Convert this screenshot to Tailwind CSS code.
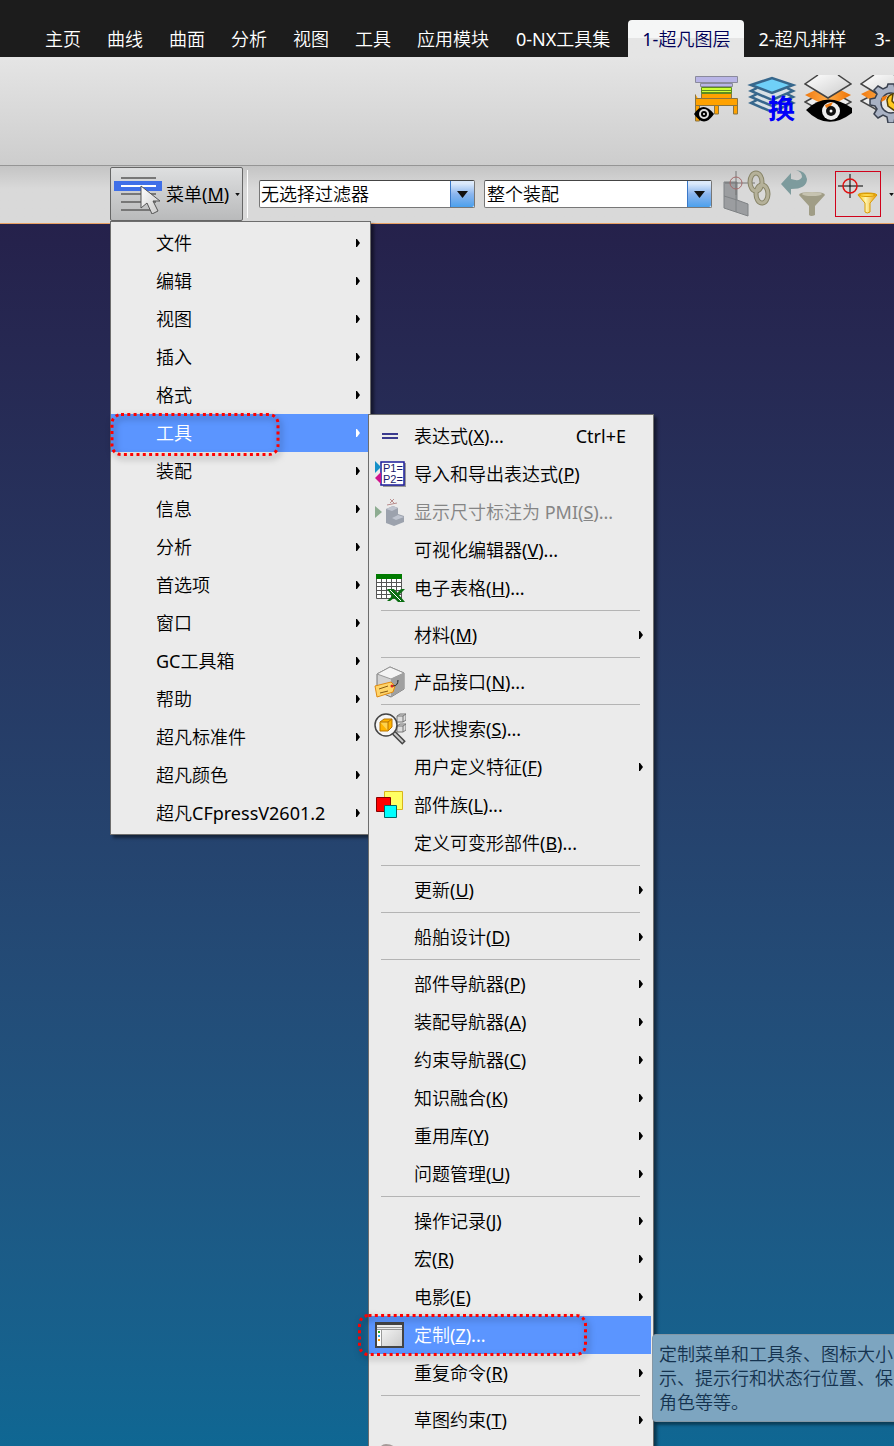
<!DOCTYPE html>
<html lang="zh-CN">
  <head>
    <meta charset="UTF-8" />
    <meta name="viewport" content="width=device-width, initial-scale=1.0" />
    <title>NX 菜单</title>
    <script src="https://cdn.jsdelivr.net/npm/@tailwindcss/browser@4"></script>
  </head>
  <body class="flex h-screen flex-col overflow-hidden bg-[#1c1c1c] font-['Noto_Sans','Noto_Sans_CJK_SC_DemiLight','Noto_Sans_CJK_SC_Light','Noto_Sans_CJK_SC',sans-serif] text-lg/6 text-black">

    <!-- Shared icon symbols -->
    <svg class="absolute size-0">
      <symbol id="arrow" viewBox="0 0 5 8"><path d="M1 0h1l3 4-3 4H1z" fill="currentColor" /></symbol>
      <symbol id="caret" viewBox="0 0 11 7"><path d="M0 0h11L5.500 7z" fill="#111" /></symbol>
      <linearGradient id="sheet" x1="0" y1="0" x2="1" y2="1"><stop offset="0" stop-color="#fff" /><stop offset="1" stop-color="#c9c9c9" /></linearGradient>
      <linearGradient id="gold" x1="0" x2="1"><stop offset="0" stop-color="#ffc400" /><stop offset=".4" stop-color="#fff6b0" /><stop offset="1" stop-color="#e89500" /></linearGradient>
      <linearGradient id="orange" x1="0" x2="1"><stop offset="0" stop-color="#f07a10" /><stop offset=".5" stop-color="#ffad4a" /><stop offset="1" stop-color="#ee7000" /></linearGradient>
    </svg>

    <!-- Ribbon tabs -->
    <nav class="flex h-[57px] shrink-0 items-end overflow-hidden pl-8 whitespace-nowrap text-white">
      <button class="h-[37px] shrink-0 px-[13px]">主页</button>
      <button class="h-[37px] shrink-0 px-[13px]">曲线</button>
      <button class="h-[37px] shrink-0 px-[13px]">曲面</button>
      <button class="h-[37px] shrink-0 px-[13px]">分析</button>
      <button class="h-[37px] shrink-0 px-[13px]">视图</button>
      <button class="h-[37px] shrink-0 px-[13px]">工具</button>
      <button class="h-[37px] shrink-0 px-[13px]">应用模块</button>
      <button class="h-[37px] shrink-0 px-[14px]">0-NX工具集</button>
      <button class="ml-1 h-[37px] shrink-0 rounded-t-sm bg-linear-to-b from-[#f5f6f6] from-50% to-[#e5e5e5] to-50% px-[14px] text-[#000058]">1-超凡图层</button>
      <button class="h-[37px] shrink-0 px-[14px]">2-超凡排样</button>
      <button class="h-[37px] shrink-0 px-[14px]">3-</button>
    </nav>

    <!-- Ribbon -->
    <div class="flex h-[109px] shrink-0 items-start justify-end gap-2 overflow-hidden border-b border-[#959595] bg-linear-to-b from-[#e5e5e5] to-[#cdcdcd] pt-[18px]">
      <button class="shrink-0" aria-label="图层料架">
        <svg class="size-12" viewBox="0 0 48 48">
          <path d="M3.500 19.500V46h4V26M22.500 29v10h4V29M41.500 29v10h4V26" fill="#ffa200" stroke="#8a7440" />
          <path d="M3.500 23.500h42v7h-42z" fill="#ffa200" stroke="#8a7440" />
          <path d="M9.500 18.500h30v5h-30z" fill="#ffa200" stroke="#8a7440" />
          <path d="M9.500 12.500h30v6h-30z" fill="#ceff38" stroke="#5d8b20" />
          <path d="M10 15.500h29M10 17.500h29" stroke="#5d8b20" />
          <path d="M8.500 8.500h32v3h-32z" fill="#b9b5e6" stroke="#8a8a9c" />
          <path d="M3.500 1.500h42v6h-42z" fill="#b9b5e6" stroke="#8a8a9c" />
          <path d="M2 39q9-14 20 0-10 15-20 0z" fill="#000" />
          <circle cx="12" cy="39" r="4" fill="#000" stroke="#ddd" stroke-width="2" />
          <circle cx="12" cy="39" r="1" fill="#fff" />
        </svg>
      </button>
      <button class="shrink-0" aria-label="图层转换">
        <svg class="size-12 overflow-visible" viewBox="0 0 48 48">
          <g fill="#d7e0e5" stroke="#37678c" stroke-width="2.500">
            <path d="M9 25l-6 3 21 9 21-9-6-3" />
            <path d="M9 19l-6 3 21 9 21-9-6-3" />
            <path d="M9 13l-6 3 21 9 21-9-6-3" />
            <path d="M3 10L24 3l21 7-21 8z" fill="#6fd0f8" />
          </g>
          <text x="20" y="44" font-size="27" font-weight="700" font-family="Noto Sans CJK SC" fill="#0000fa">换</text>
        </svg>
      </button>
      <button class="shrink-0" aria-label="图层可见">
        <svg class="size-12" viewBox="0 0 48 48">
          <path d="M1 27l23-13 23 13-23 13z" fill="#eee" stroke="#444" stroke-width="1.500" />
          <path d="M1 20L24 9l23 11-23 12z" fill="url(#orange)" />
          <path d="M14 0L1 9l23 14L47 9 34 0z" fill="url(#sheet)" />
          <path d="M14 0L1 9l23 14L47 9 34 0" fill="none" stroke="#444" stroke-width="1.500" />
          <path d="M2 35q20-20 46-2v5q-25 19-46-3z" fill="#000" />
          <circle cx="27" cy="36" r="9" fill="#eee" />
          <path d="M21 30l8-3-2 4-5 2z" fill="#f07a10" />
          <circle cx="27" cy="36" r="5" fill="#111" />
          <circle cx="27" cy="36" r="1.500" fill="#fff" />
        </svg>
      </button>
      <button class="-mr-3.5 shrink-0" aria-label="图层设置">
        <svg class="size-12" viewBox="0 0 48 48">
          <path d="M1 26l23-12 23 12-23 13z" fill="#eee" stroke="#444" stroke-width="1.500" />
          <path d="M1 19L24 8l23 12-23 13z" fill="url(#orange)" />
          <path d="M14 0L1 9l23 14L47 9 34 0" fill="url(#sheet)" stroke="#444" stroke-width="1.500" />
          <g fill="#a9b2c4" stroke="#39404e" stroke-width="1.500">
            <path d="M28 9h6l1 5 4 2 4-3 4 4v22l-4 4-4-3-4 2-1 6h-6l-1-6-4-2-5 3-4-4 3-5-2-3-5-1v-6l5-1 2-4-3-4 4-4 5 3 4-2z" />
            <circle cx="31" cy="28" r="10" fill="#e6e6e6" />
          </g>
          <path d="M33 19q-5 1-6 6l1 6 7 5 9 1v-6l-8-1-4-4z" fill="#ffc820" stroke="#5a4300" stroke-width="1.500" />
          <path d="M22 22l6-2-3 5-4 2z" fill="#f07a10" />
        </svg>
      </button>
    </div>

    <!-- Selection bar -->
    <div class="flex h-[58px] shrink-0 items-center border-b border-[#e9a063] bg-linear-to-b from-[#c4c4c4] to-[#d9d9d9] to-40% pb-px pl-[110px]">
      <div class="relative z-10 h-[54px] shrink-0">
        <button class="flex h-full w-[133px] items-center rounded-xs border border-[#666] bg-linear-to-b from-[#dedfe0] to-[#b9babb] pl-[3px] whitespace-nowrap">
          <svg class="h-10 w-[50px] shrink-0" viewBox="0 0 50 40">
            <path d="M7 4h35M7 20h35M7 28h35M7 36h35" stroke="#777" stroke-width="2" />
            <path d="M0 7h48v10H0z" fill="#3f6fe8" />
            <path d="M7 12h35" stroke="#fff" stroke-width="2" />
            <path d="M27 12v22l6-5 5 11 6-3-5-10h7z" fill="url(#sheet)" stroke="#555" />
          </svg>
          <span class="ml-[2px]">菜单(<u>M</u>)</span>
          <svg class="ml-1.5 h-[3px] w-[5px]" viewBox="0 0 11 7"><use href="#caret" /></svg>
        </button>

        <!-- Main menu -->
        <ul class="absolute top-full left-0 w-[261px] border border-[#6d6d6d] bg-[#ebebeb] py-[2px] pr-px shadow-[3px_3px_3px_#0007] *:flex *:h-[38px] *:items-center *:justify-between *:pr-[9px] *:pl-[45px] *:whitespace-nowrap">
          <li><button>文件</button><svg class="h-2 w-[5px]"><use href="#arrow" /></svg></li>
          <li><button>编辑</button><svg class="h-2 w-[5px]"><use href="#arrow" /></svg></li>
          <li><button>视图</button><svg class="h-2 w-[5px]"><use href="#arrow" /></svg></li>
          <li><button>插入</button><svg class="h-2 w-[5px]"><use href="#arrow" /></svg></li>
          <li><button>格式</button><svg class="h-2 w-[5px]"><use href="#arrow" /></svg></li>
          <li class="relative bg-[#5b95ff] text-white">
            <button>工具</button><svg class="h-2 w-[5px]"><use href="#arrow" /></svg>
            <svg class="absolute -top-1 -left-1 h-12 w-44 overflow-visible drop-shadow-[2px_3px_3px_#0008]">
              <rect x="5" y="4.500" width="166" height="40" rx="9" fill="none" stroke="#f00" stroke-width="3" stroke-dasharray="3 3.300" />
            </svg>

            <!-- Tools submenu -->
            <ul class="absolute top-0 left-[257px] w-[286px] border border-[#6d6d6d] bg-[#ebebeb] py-[2px] pr-[2px] text-black shadow-[3px_3px_3px_#0007] [&>li]:flex [&>li]:h-[38px] [&>li]:items-center [&>li]:pr-[8px] [&>li]:pl-[5px] [&>li]:whitespace-nowrap [&>hr]:mt-[3px] [&>hr]:mr-[11px] [&>hr]:mb-[5px] [&>hr]:ml-3 [&>hr]:border-[#b4b4b4]">
              <li>
                <svg class="size-8" viewBox="0 0 32 32"><path d="M8 14h16M8 18h16" stroke="#000070" stroke-width="1.500" /></svg>
                <button class="ml-2">表达式(<u>X</u>)...</button><span class="mr-[17px] ml-auto">Ctrl+E</span>
              </li>
              <li>
                <svg class="size-8" viewBox="0 0 32 32">
                  <path d="M9 5h23v24H9z" fill="#999" />
                  <path d="M7 4h23v23H7z" fill="#fff" stroke="#1d1d9c" stroke-width="1.500" />
                  <path d="M1 3l6 6-6 6z" fill="#1590c8" /><path d="M7 14v12l-6-6z" fill="#d0108c" />
                  <text x="9" y="14" font-size="11" font-family="Liberation Sans" fill="#1a1a6e">P1=</text>
                  <text x="9" y="25" font-size="11" font-family="Liberation Sans" fill="#1a1a6e">P2=</text>
                </svg>
                <button class="ml-2">导入和导出表达式(<u>P</u>)</button>
              </li>
              <li class="text-[#858585]">
                <svg class="size-8" viewBox="0 0 32 32">
                  <path d="M1 10l7 6-7 6z" fill="#8dac91" />
                  <path d="M12 13l7-3 5 2v6l6 2v6l-10 4-8-3z" fill="#9ca2ad" />
                  <path d="M12 13l7-3 5 2-6 3zM18 22l6-3 6 2-8 3z" fill="#bfc4cf" />
                  <path d="M13 9l10-2M16 3l4 4M20 3l-4 4" stroke="#b98c8c" />
                </svg>
                <button class="ml-2" disabled>显示尺寸标注为 PMI(<u>S</u>)...</button>
              </li>
              <li><button class="ml-10">可视化编辑器(<u>V</u>)...</button></li>
              <li>
                <svg class="size-8" viewBox="0 0 32 32">
                  <path d="M2.500 3.500h25v23h-25z" fill="#fff" stroke="#555" />
                  <path d="M2 10.500h25M2 14.500h25M2 18.500h25M2 22.500h25M7.500 7v19M12.500 7v19M17.500 7v19M22.500 7v19" stroke="#555" />
                  <path d="M2 2h26v5H2z" fill="#007a00" />
                  <path d="M13 17h7l3 4 4-4h4l-6 6 6 7h-7l-4-4-4 3h-3l5-5z" fill="#0a6e12" /><path d="M16 18l11 11" stroke="#fff" />
                </svg>
                <button class="ml-2">电子表格(<u>H</u>)...</button>
              </li>
              <hr />
              <li><button class="ml-10">材料(<u>M</u>)</button><svg class="ml-auto h-2 w-[5px]"><use href="#arrow" /></svg></li>
              <hr />
              <li>
                <svg class="size-8" viewBox="0 0 32 32">
                  <path d="M3 8l13-7 14 6v16l-13 8-14-6z" fill="#d2d2d2" stroke="#777" />
                  <path d="M3 8l13-7 14 6-13 6z" fill="#f4f4f4" stroke="#999" /><path d="M17 13l13-6v16l-13 8z" fill="#a0a0a0" />
                  <path d="M1 20l16-4 4 4-2 6-16 5z" fill="#ffd56a" stroke="#e08a10" />
                  <path d="M5 23l9-3M6 27l8-2" stroke="#8a5a10" /><circle cx="18" cy="20" r="1.500" fill="#d22" />
                  <path d="M19 20q5 0 5-6" fill="none" stroke="#222" />
                </svg>
                <button class="ml-2">产品接口(<u>N</u>)...</button>
              </li>
              <hr />
              <li>
                <svg class="size-8" viewBox="0 0 32 32">
                  <g fill="#ddd" stroke="#777"><path d="M23 3l3-2h6v6l-3 2h-6zM23 3h6v6M29 3l3-2M23 13l3-2h6v6l-3 2h-6zM23 13h6v6M29 13l3-2" /></g>
                  <path d="M20 20l10 10" stroke="#444" stroke-width="5" /><path d="M20 20l9 9" stroke="#ccc" stroke-width="2" />
                  <circle cx="12" cy="12" r="11" fill="#f6f6f6" stroke="#444" stroke-width="1.500" />
                  <path d="M6 9l4-3h8v8l-4 4H6z" fill="#ffb400" stroke="#b87400" /><path d="M6 9h8v9M14 9l4-3" fill="#ffd34d" stroke="#b87400" />
                </svg>
                <button class="ml-2">形状搜索(<u>S</u>)...</button>
              </li>
              <li><button class="ml-10">用户定义特征(<u>F</u>)</button><svg class="ml-auto h-2 w-[5px]"><use href="#arrow" /></svg></li>
              <li>
                <svg class="size-8" viewBox="0 0 32 32">
                  <path d="M10.500 2.500h18v18h-18z" fill="#ffff64" stroke="#d9b51a" />
                  <path d="M2.500 8.500h14v14h-14z" fill="#f00" stroke="#800" />
                  <path d="M10.500 16.500h12v12h-12z" fill="#0ff" stroke="#066" />
                </svg>
                <button class="ml-2">部件族(<u>L</u>)...</button>
              </li>
              <li><button class="ml-10">定义可变形部件(<u>B</u>)...</button></li>
              <hr />
              <li><button class="ml-10">更新(<u>U</u>)</button><svg class="ml-auto h-2 w-[5px]"><use href="#arrow" /></svg></li>
              <hr />
              <li><button class="ml-10">船舶设计(<u>D</u>)</button><svg class="ml-auto h-2 w-[5px]"><use href="#arrow" /></svg></li>
              <hr />
              <li><button class="ml-10">部件导航器(<u>P</u>)</button><svg class="ml-auto h-2 w-[5px]"><use href="#arrow" /></svg></li>
              <li><button class="ml-10">装配导航器(<u>A</u>)</button><svg class="ml-auto h-2 w-[5px]"><use href="#arrow" /></svg></li>
              <li><button class="ml-10">约束导航器(<u>C</u>)</button><svg class="ml-auto h-2 w-[5px]"><use href="#arrow" /></svg></li>
              <li><button class="ml-10">知识融合(<u>K</u>)</button><svg class="ml-auto h-2 w-[5px]"><use href="#arrow" /></svg></li>
              <li><button class="ml-10">重用库(<u>Y</u>)</button><svg class="ml-auto h-2 w-[5px]"><use href="#arrow" /></svg></li>
              <li><button class="ml-10">问题管理(<u>U</u>)</button><svg class="ml-auto h-2 w-[5px]"><use href="#arrow" /></svg></li>
              <hr />
              <li><button class="ml-10">操作记录(<u>J</u>)</button><svg class="ml-auto h-2 w-[5px]"><use href="#arrow" /></svg></li>
              <li><button class="ml-10">宏(<u>R</u>)</button><svg class="ml-auto h-2 w-[5px]"><use href="#arrow" /></svg></li>
              <li><button class="ml-10">电影(<u>E</u>)</button><svg class="ml-auto h-2 w-[5px]"><use href="#arrow" /></svg></li>
              <li class="relative bg-[#5b95ff] text-white">
                <svg class="size-8" viewBox="0 0 32 32">
                  <path d="M2 4h27v24H2z" fill="url(#sheet)" stroke="#444" stroke-width="2" />
                  <path d="M1 3h29v3H1z" fill="#444" /><path d="M3 6h25v4H3z" fill="#eee" /><path d="M3 8.500h25M3 10.500h25" stroke="#999" />
                  <path d="M3 11h4v16H3z" fill="#fff" /><path d="M7.500 11v16" stroke="#999" />
                  <path d="M4 12h2v2H4z" fill="#2a2" /><path d="M4 16h2v2H4z" fill="#2ae" /><path d="M4 20h2v2H4z" fill="#f90" />
                </svg>
                <button class="ml-2">定制(<u>Z</u>)...</button>
                <svg class="absolute -top-1 -left-3 h-12 w-60 overflow-visible drop-shadow-[2px_3px_3px_#0008]">
                  <rect x="2.500" y="3.500" width="226" height="39" rx="9" fill="none" stroke="#f00" stroke-width="3" stroke-dasharray="3 3.300" />
                </svg>
                <p role="tooltip" class="absolute top-[18px] left-[283px] w-64 rounded-sm border border-[#8497a5] bg-[#7da5c0] py-[7px] pl-[6px] text-[#15334f] shadow-[3px_3px_3px_#0006]">定制菜单和工具条、图标大小<br />示、提示行和状态行位置、保<br />角色等等。</p>
              </li>
              <li><button class="ml-10">重复命令(<u>R</u>)</button><svg class="ml-auto h-2 w-[5px]"><use href="#arrow" /></svg></li>
              <hr />
              <li><button class="ml-10">草图约束(<u>T</u>)</button><svg class="ml-auto h-2 w-[5px]"><use href="#arrow" /></svg></li>
              <li>
                <svg class="size-8" viewBox="0 0 32 32"><path d="M4 10q2-8 8-8 8 0 12 7v18H4z" fill="#a59b99" /><path d="M9 5l4 1-3 3z" fill="#d8cfcd" /></svg>
              </li>
            </ul>
          </li>
          <li><button>装配</button><svg class="h-2 w-[5px]"><use href="#arrow" /></svg></li>
          <li><button>信息</button><svg class="h-2 w-[5px]"><use href="#arrow" /></svg></li>
          <li><button>分析</button><svg class="h-2 w-[5px]"><use href="#arrow" /></svg></li>
          <li><button>首选项</button><svg class="h-2 w-[5px]"><use href="#arrow" /></svg></li>
          <li><button>窗口</button><svg class="h-2 w-[5px]"><use href="#arrow" /></svg></li>
          <li><button>GC工具箱</button><svg class="h-2 w-[5px]"><use href="#arrow" /></svg></li>
          <li><button>帮助</button><svg class="h-2 w-[5px]"><use href="#arrow" /></svg></li>
          <li><button>超凡标准件</button><svg class="h-2 w-[5px]"><use href="#arrow" /></svg></li>
          <li><button>超凡颜色</button><svg class="h-2 w-[5px]"><use href="#arrow" /></svg></li>
          <li><button>超凡CFpressV2601.2</button><svg class="h-2 w-[5px]"><use href="#arrow" /></svg></li>
        </ul>
      </div>

      <div class="ml-1 h-12 w-px shrink-0 bg-white"></div>

      <!-- Filters -->
      <div class="ml-[11px] flex h-7 w-[216px] shrink-0 rounded-xs border border-[#777] border-t-[#444] bg-white">
        <select aria-label="选择过滤器" class="min-w-0 flex-1 appearance-none pl-px"><option>无选择过滤器</option></select>
        <span class="flex w-6 items-center justify-center rounded-r-xs border-l border-[#3a78c8] bg-linear-to-b from-[#dbe9fb] from-10% via-[#8cb6ee] via-50% to-[#4aa0ec]"><svg class="h-[7px] w-[11px]"><use href="#caret" /></svg></span>
      </div>
      <div class="ml-[9px] flex h-7 w-[228px] shrink-0 rounded-xs border border-[#777] border-t-[#444] bg-white">
        <select aria-label="选择范围" class="min-w-0 flex-1 appearance-none pl-[2px]"><option>整个装配</option></select>
        <span class="flex w-6 items-center justify-center rounded-r-xs border-l border-[#3a78c8] bg-linear-to-b from-[#dbe9fb] from-10% via-[#8cb6ee] via-50% to-[#4aa0ec]"><svg class="h-[7px] w-[11px]"><use href="#caret" /></svg></span>
      </div>

      <button class="ml-[10px] shrink-0" aria-label="关联" disabled>
        <svg class="h-12 w-[50px]" viewBox="0 0 50 48">
          <path d="M2 12h13v18l11 4v12L2 38z" fill="#9b9da0" stroke="#7f8285" />
          <path d="M14 12v30M2 26l13 4" stroke="#7f8285" />
          <path d="M14 1v24M3 13h30" stroke="#777" /><circle cx="14" cy="13" r="6" fill="none" stroke="#a36a6a" />
          <g fill="none" stroke="#878467" stroke-width="5"><ellipse cx="34" cy="12" rx="6" ry="9" /><ellipse cx="40" cy="24" rx="6" ry="9" /></g>
          <g fill="none" stroke="#b5b199" stroke-width="3"><ellipse cx="34" cy="12" rx="6" ry="9" /><ellipse cx="40" cy="24" rx="6" ry="9" /></g>
        </svg>
      </button>
      <button class="ml-2 shrink-0" aria-label="重置过滤器" disabled>
        <svg class="h-12 w-[46px]" viewBox="0 0 46 48">
          <path d="M1 14L11 3v6q9 3 11-2 0-5-6-7 10 1 11 9 0 10-16 10v6z" fill="#7d9b9d" />
          <path d="M19 25q0-3 13-3t13 3L35 36v9q-4 2-6 0v-9z" fill="#a09d86" /><ellipse cx="32" cy="24" rx="10" ry="2" fill="#c6c3b0" />
        </svg>
      </button>
      <button class="ml-[9px] size-[46px] shrink-0 border border-[#d0021b]" aria-label="点过滤器">
        <svg class="size-full" viewBox="0 0 44 44">
          <path d="M14 2v24M2 14h25" stroke="#000" /><circle cx="14" cy="14" r="7" fill="none" stroke="#e01010" stroke-width="1.500" />
          <path d="M22 23q0-2 9-2t10 2l-7 8v9q-3 2-5 0v-9z" fill="url(#gold)" stroke="#d99a00" /><ellipse cx="31" cy="23" rx="8" ry="1.500" fill="#ffd84a" stroke="#d99a00" />
        </svg>
      </button>
      <svg class="ml-2 h-[3px] w-[5px] shrink-0" viewBox="0 0 11 7"><use href="#caret" /></svg>
    </div>

    <!-- Graphics viewport -->
    <main class="flex-1 bg-linear-to-b from-[#25214b] to-[#0f6793]"></main>
  </body>
</html>
